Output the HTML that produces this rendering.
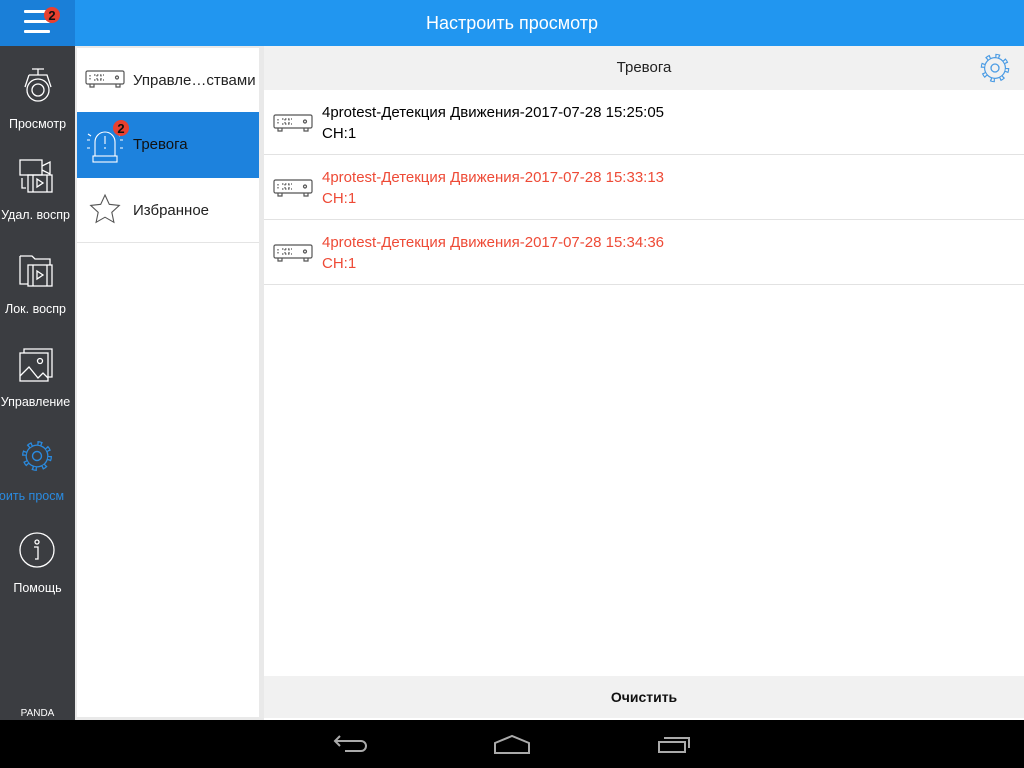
<!DOCTYPE html>
<html><head><meta charset="utf-8"><style>
*{margin:0;padding:0;box-sizing:border-box}
body{width:1024px;height:768px;overflow:hidden;font-family:"Liberation Sans","Noto Sans CJK SC",sans-serif;background:#e9e9e9;position:relative}
.abs{position:absolute}
#top{left:0;top:0;width:1024px;height:46px;background:#2196f0;color:#fff;font-size:18px;text-align:center;line-height:46px}
#ham{left:0;top:0;width:75px;height:46px;background:#1a7fd8}
#side{left:0;top:46px;width:75px;height:674px;background:#3b3d41;color:#fff;font-size:12.5px;overflow:hidden}
.si{position:absolute;left:0;width:75px;text-align:center;white-space:nowrap}
#mid{left:77px;top:48px;width:182px;height:669px;background:#fff}
.mi{position:absolute;left:0;width:182px;height:65px;border-bottom:1px solid #e4e4e4;font-size:15px;line-height:65px;padding-left:56px;color:#222}
#main{left:264px;top:46px;width:760px;height:674px;background:#fff}
#hdr{left:0;top:0;width:760px;height:44px;background:#f1f1f1;text-align:center;line-height:44px;font-size:15px;color:#222}
.row{position:absolute;left:0;width:760px;height:65px;border-bottom:1px solid #e2e2e2;font-size:15px}
.row .t{position:absolute;left:58px;top:12px;line-height:21px}
.red{color:#ee4a36}
#clr{left:0;top:630px;width:760px;height:42px;background:#f1f1f1;text-align:center;line-height:42px;font-size:14px;font-weight:bold;color:#111}
#nav{left:0;top:720px;width:1024px;height:48px;background:#000}
.badge{position:absolute;width:16px;height:16px;border-radius:50%;background:#e8402f;color:#111;font-size:13px;font-weight:bold;text-align:center;line-height:17px}
</style></head><body>
<div id="top" class="abs">Настроить просмотр</div>
<div id="ham" class="abs">
<div class="abs" style="left:24px;top:10px;width:26px;height:3px;background:#fff;border-radius:1px"></div>
<div class="abs" style="left:24px;top:20px;width:26px;height:3px;background:#fff;border-radius:1px"></div>
<div class="abs" style="left:24px;top:30px;width:26px;height:3px;background:#fff;border-radius:1px"></div>
<div class="badge" style="left:44px;top:7px">2</div>
</div>
<div id="side" class="abs">
<svg class="abs" style="left:20px;top:20px" width="36" height="40" viewBox="0 0 36 40" fill="none" stroke="#fff" stroke-width="1.3"><path d="M12 3h12M18 3v6M9 9h18l4 12M5 21l4-12"/><circle cx="18" cy="24" r="11"/><circle cx="18" cy="24" r="6"/></svg>
<div class="si" style="top:71px">Просмотр</div>
<svg class="abs" style="left:18px;top:112px" width="38" height="38" viewBox="0 0 38 38" fill="none" stroke="#fff" stroke-width="1.3"><rect x="2" y="2" width="22" height="15"/><path d="M24 8l8-4v12l-8-4"/><rect x="10" y="17" width="24" height="17"/><path d="M15 17v17M29 17v17M19 21l6 4-6 4z"/><path d="M4 20v10h4"/></svg>
<div class="si" style="top:162px;left:-2px">Удал. воспр</div>
<svg class="abs" style="left:18px;top:206px" width="38" height="38" viewBox="0 0 38 38" fill="none" stroke="#fff" stroke-width="1.3"><path d="M2 4h12l3 3h15v6"/><path d="M2 4v28h8"/><rect x="10" y="13" width="24" height="21"/><path d="M15 13v21M29 13v21M19 19l6 4-6 4z"/></svg>
<div class="si" style="top:256px;left:-2px">Лок. воспр</div>
<svg class="abs" style="left:18px;top:300px" width="38" height="38" viewBox="0 0 38 38" fill="none" stroke="#fff" stroke-width="1.3"><rect x="2" y="7" width="28" height="28"/><path d="M6 7V3h28v28h-4"/><circle cx="22" cy="15" r="2.5"/><path d="M2 30l9-9 9 11 5-5 5 5"/></svg>
<div class="si" style="top:349px;left:-2px">Управление</div>
<svg class="abs" style="left:19px;top:392px" width="36" height="36" viewBox="-18 -18 36 36">
<circle r="11.5" fill="#2a8be0"/><circle r="12.5" fill="none" stroke="#2a8be0" stroke-width="5" stroke-dasharray="4.6 5.22"/>
<circle r="10.2" fill="#3b3d41"/><circle r="12.5" fill="none" stroke="#3b3d41" stroke-width="2.6" stroke-dasharray="2 7.82" stroke-dashoffset="-1.3"/>
<circle r="4.5" fill="none" stroke="#2a8be0" stroke-width="1.4"/></svg>
<div class="si" style="top:443px;left:-6px;color:#2a8be0">оить просм</div>
<svg class="abs" style="left:18px;top:485px" width="38" height="38" viewBox="0 0 38 38" fill="none" stroke="#fff" stroke-width="1.3"><circle cx="19" cy="19" r="17"/><circle cx="19" cy="11" r="2"/><path d="M16 16h4v12h-3"/></svg>
<div class="si" style="top:535px">Помощь</div>
<div class="si" style="top:662px;font-size:10px">PANDA</div>
</div>
<div id="mid" class="abs">
<div class="mi" style="top:0">Управле…ствами
<svg class="abs" style="left:8px;top:22px" width="40" height="20" viewBox="0 0 40 20" fill="none" stroke="#555" stroke-width="1.2"><rect x="1" y="1" width="38" height="13" rx="1.5"/><path d="M5 14v3h4v-3M31 14v3h4v-3"/><path d="M5 5v5M9 5h10M9 10h10M12 5v5M16 5v5" stroke-dasharray="1.5 1.5"/><circle cx="32" cy="7.5" r="1.5"/></svg></div>
<div class="mi" style="top:64px;height:66px;background:#1d82dd;border:none;color:#111">Тревога
<svg class="abs" style="left:8px;top:14px" width="40" height="40" viewBox="0 0 40 40" fill="none" stroke="#fff" stroke-width="1.1"><path d="M10 30V16a10 10 0 0 1 20 0v14"/><rect x="8" y="30" width="24" height="6"/><path d="M20 10v8M20 21v2M2 14h3M2 22h3M35 14h3M35 22h3M3 8l3 2M37 8l-3 2"/></svg>
<div class="badge" style="left:36px;top:8px">2</div></div>
<div class="mi" style="top:130px">Избранное
<svg class="abs" style="left:12px;top:15px" width="32" height="32" viewBox="0 0 32 32" fill="none" stroke="#555" stroke-width="1.1"><path d="M16 2l4.3 9.3 10 1.1-7.5 6.9 2.1 10L16 24.2 7.1 29.3l2.1-10L1.7 12.4l10-1.1z"/></svg></div>
</div>
<div id="main" class="abs">
<div id="hdr" class="abs">Тревога
<svg class="abs" style="left:714px;top:5px" width="34" height="34" viewBox="-17 -17 34 34">
<circle r="11" fill="#4a9be4"/><circle r="12" fill="none" stroke="#4a9be4" stroke-width="4.6" stroke-dasharray="4.4 5.02"/>
<circle r="9.8" fill="#f1f1f1"/><circle r="12" fill="none" stroke="#f1f1f1" stroke-width="2.4" stroke-dasharray="2 7.42" stroke-dashoffset="-1.2"/>
<circle r="4" fill="none" stroke="#4a9be4" stroke-width="1.3"/></svg></div>
<div class="row" style="top:44px"><svg class="abs" style="left:9px;top:24px" width="40" height="19" viewBox="0 0 40 19" fill="none" stroke="#555" stroke-width="1.2"><rect x="1" y="1" width="38" height="13" rx="1.5"/><path d="M5 14v3h4v-3M31 14v3h4v-3"/><path d="M5 5v5M9 5h10M9 10h10M12 5v5M16 5v5" stroke-dasharray="1.5 1.5"/><circle cx="32" cy="7.5" r="1.5"/></svg><div class="t">4protest-Детекция Движения-2017-07-28 15:25:05<br>CH:1</div></div>
<div class="row red" style="top:109px"><svg class="abs" style="left:9px;top:24px" width="40" height="19" viewBox="0 0 40 19" fill="none" stroke="#555" stroke-width="1.2"><rect x="1" y="1" width="38" height="13" rx="1.5"/><path d="M5 14v3h4v-3M31 14v3h4v-3"/><path d="M5 5v5M9 5h10M9 10h10M12 5v5M16 5v5" stroke-dasharray="1.5 1.5"/><circle cx="32" cy="7.5" r="1.5"/></svg><div class="t">4protest-Детекция Движения-2017-07-28 15:33:13<br>CH:1</div></div>
<div class="row red" style="top:174px"><svg class="abs" style="left:9px;top:24px" width="40" height="19" viewBox="0 0 40 19" fill="none" stroke="#555" stroke-width="1.2"><rect x="1" y="1" width="38" height="13" rx="1.5"/><path d="M5 14v3h4v-3M31 14v3h4v-3"/><path d="M5 5v5M9 5h10M9 10h10M12 5v5M16 5v5" stroke-dasharray="1.5 1.5"/><circle cx="32" cy="7.5" r="1.5"/></svg><div class="t">4protest-Детекция Движения-2017-07-28 15:34:36<br>CH:1</div></div>
<div id="clr" class="abs">Очистить</div>
</div>
<div id="nav" class="abs">
<svg class="abs" style="left:332px;top:14px" width="36" height="20" viewBox="0 0 36 20" fill="none" stroke="#aaa" stroke-width="2"><path d="M8 2L3 7l5 5M3 7h26a5 5 0 0 1 0 10H13"/></svg>
<svg class="abs" style="left:493px;top:14px" width="38" height="20" viewBox="0 0 38 20" fill="none" stroke="#aaa" stroke-width="2"><path d="M2 19V9L19 2l17 7v10z"/></svg>
<svg class="abs" style="left:656px;top:14px" width="36" height="20" viewBox="0 0 36 20" fill="none" stroke="#aaa" stroke-width="2"><rect x="3" y="8" width="26" height="10"/><path d="M8 4h25v10"/></svg>
</div>
</body></html>
